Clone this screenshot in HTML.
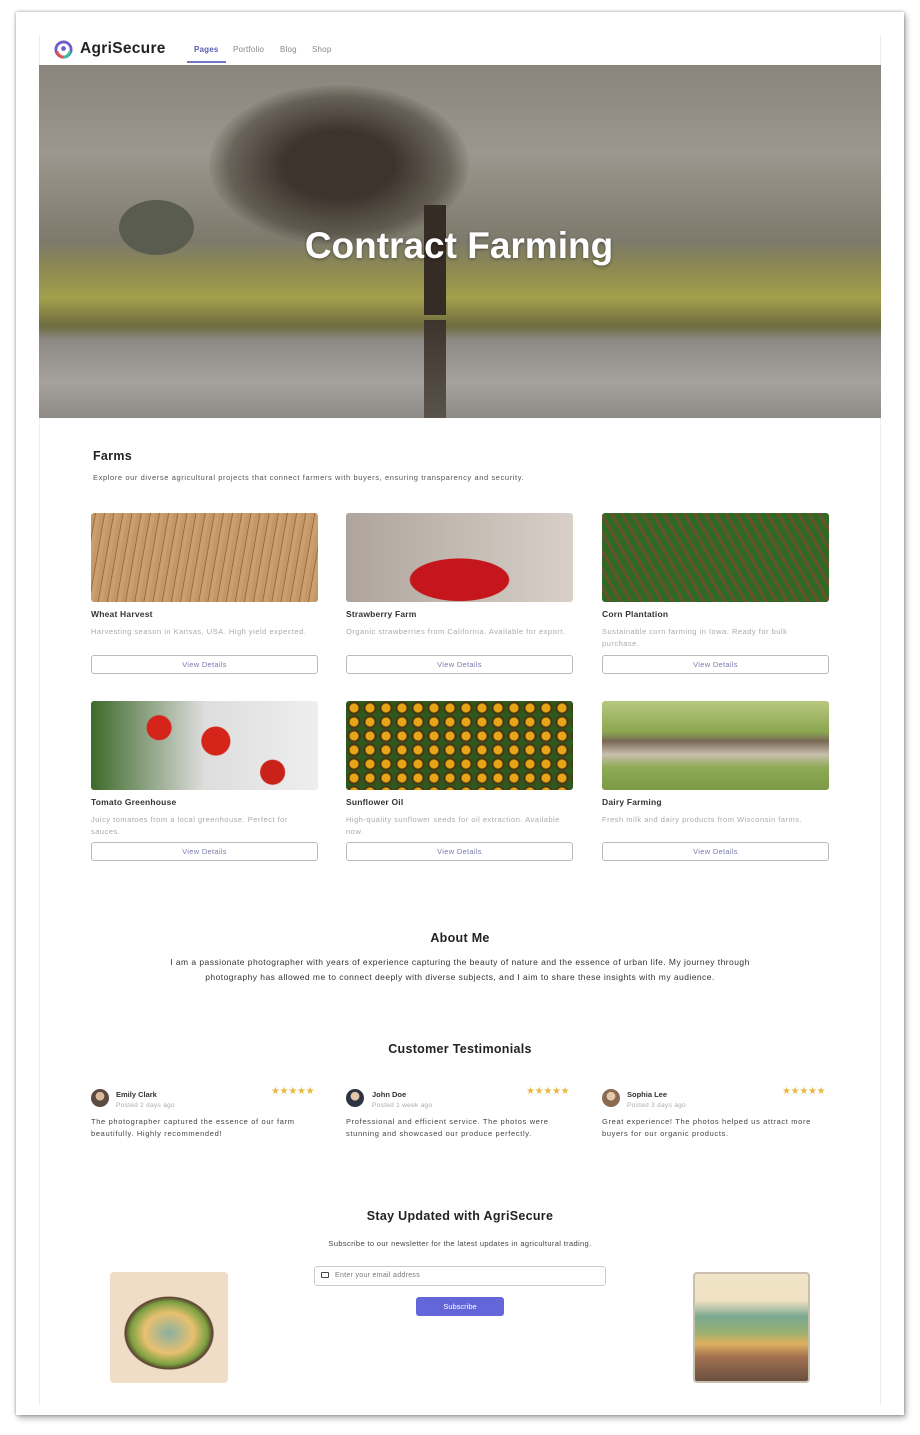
<!DOCTYPE html>
<html><head><meta charset="utf-8"><style>
*{box-sizing:border-box;margin:0;padding:0}
body{width:920px;height:1435px;background:#fff;font-family:"Liberation Sans",sans-serif;position:relative;overflow:hidden;color:#222}
.frame{position:absolute;left:16px;top:12px;width:888px;height:1403px;background:#fff;box-shadow:0 0 3px rgba(0,0,0,.35),2px 3px 6px rgba(0,0,0,.3)}
.inner{position:absolute;left:39px;top:35px;width:842px;height:1370px;border-left:1px solid #eee;border-right:1px solid #eee}
.abs{position:absolute}
.nav{font-size:8px;color:#888;letter-spacing:.2px}
.hero{left:39px;top:65px;width:842px;height:353px;background:linear-gradient(180deg,#8a857c 0%,#9c978e 25%,#7d7a6c 50%,#8d8a50 58%,#a3a04c 66%,#6e6c40 74%,#8d8a86 78%,#a5a29d 90%,#8e8b86 100%);overflow:hidden}
.card-img{width:227px;height:89px;border-radius:3px}
.ct{font-size:8.5px;font-weight:bold;color:#333;letter-spacing:.2px}
.cd{font-size:7.5px;color:#aaa;line-height:12px;letter-spacing:.5px}
.btn{width:227px;height:19px;border:1px solid #bbb;border-radius:3px;font-size:7.5px;color:#7b7bb0;text-align:center;line-height:17px;letter-spacing:.3px}
.h{font-weight:bold;color:#222;letter-spacing:.3px}
.tn{font-size:7.5px;font-weight:bold;color:#333}
.tp{font-size:6.5px;color:#aaa;letter-spacing:.3px}
.tt{font-size:7.5px;color:#444;line-height:12px;width:222px;letter-spacing:.65px}
.st{font-size:10px;color:#e8b93c;letter-spacing:-.3px}
.av{width:18px;height:18px;border-radius:50%;background:radial-gradient(circle at 50% 40%,#d9b89c 30%,#5a4a40 32%)}
</style></head><body>
<div class="frame"></div>
<div class="inner"></div>
<svg class="abs" style="left:54px;top:40px" width="19" height="19" viewBox="0 0 20 20"><circle cx="10" cy="10" r="8" fill="none" stroke="#6a5fc8" stroke-width="3"/><path d="M3 12 A8 8 0 0 0 10 18" stroke="#e0524f" stroke-width="3" fill="none"/><path d="M10 18 A8 8 0 0 0 17 12" stroke="#3cbf9c" stroke-width="3" fill="none"/><circle cx="10" cy="9" r="2.5" fill="#6a5fc8"/></svg>
<div class="abs h" style="left:80px;top:40px;font-size:15.5px">AgriSecure</div>
<div class="abs nav" style="left:194px;top:45px;color:#5a5fb0;font-weight:bold">Pages</div>
<div class="abs" style="left:187px;top:61px;width:39px;height:2px;background:#7078c0"></div>
<div class="abs nav" style="left:233px;top:45px">Portfolio</div>
<div class="abs nav" style="left:280px;top:45px">Blog</div>
<div class="abs nav" style="left:312px;top:45px">Shop</div>
<div class="abs hero">
<div class="abs" style="left:170px;top:20px;width:260px;height:160px;border-radius:50%;background:radial-gradient(ellipse,#3d352d 30%,rgba(60,52,44,.5) 60%,transparent 72%)"></div>
<div class="abs" style="left:385px;top:140px;width:22px;height:110px;background:#352c25"></div>
<div class="abs" style="left:385px;top:255px;width:22px;height:100px;background:linear-gradient(#3d352d,#5a534c)"></div>
<div class="abs" style="left:80px;top:135px;width:75px;height:55px;border-radius:50%;background:#5b5c50"></div>
<div class="abs" style="left:230px;top:160px;width:380px;text-align:center;color:#fff;font-weight:bold;font-size:37px;text-shadow:0 1px 3px rgba(0,0,0,.4)">Contract Farming</div>
</div>
<div class="abs h" style="left:93px;top:449px;font-size:12.5px">Farms</div>
<div class="abs" style="left:93px;top:473px;font-size:7.5px;color:#555;letter-spacing:.6px">Explore our diverse agricultural projects that connect farmers with buyers, ensuring transparency and security.</div>

<div class="abs card-img" style="left:91px;top:513px;background:repeating-linear-gradient(100deg,#c49766 0 4px,#9b6d45 4px 5px,#caa070 5px 9px)"></div>
<div class="abs card-img" style="left:346px;top:513px;background:radial-gradient(ellipse 70px 30px at 50% 75%,#c4161c 70%,transparent 72%),linear-gradient(90deg,#aea49c,#d8d0c8)"></div>
<div class="abs card-img" style="left:602px;top:513px;background:repeating-linear-gradient(60deg,#2e6a22 0 6px,#6a5030 6px 9px)"></div>
<div class="abs card-img" style="left:91px;top:701px;background:radial-gradient(circle at 30% 30%,#d5251a 12px,transparent 13px),radial-gradient(circle at 55% 45%,#d5251a 14px,transparent 15px),radial-gradient(circle at 80% 80%,#c9221a 12px,transparent 13px),linear-gradient(90deg,#3e6a2a,#ddd 50%,#eee)"></div>
<div class="abs card-img" style="left:346px;top:701px;background:radial-gradient(circle,#e7a51a 4px,#4a3010 5px,#2f5a1e 8px) 0 0/16px 14px"></div>
<div class="abs card-img" style="left:602px;top:701px;background:linear-gradient(#b8c880 0,#8aa650 35%,#7a6858 45%,#c8bfae 60%,#8eaa54 75%,#7b9a48)"></div>

<div class="abs ct" style="left:91px;top:609px">Wheat Harvest</div>
<div class="abs cd" style="left:91px;top:626px">Harvesting season in Kansas, USA. High yield expected.</div>
<div class="abs btn" style="left:91px;top:655px">View Details</div>
<div class="abs ct" style="left:346px;top:609px">Strawberry Farm</div>
<div class="abs cd" style="left:346px;top:626px">Organic strawberries from California. Available for export.</div>
<div class="abs btn" style="left:346px;top:655px">View Details</div>
<div class="abs ct" style="left:602px;top:609px">Corn Plantation</div>
<div class="abs cd" style="left:602px;top:626px;width:210px">Sustainable corn farming in Iowa. Ready for bulk purchase.</div>
<div class="abs btn" style="left:602px;top:655px">View Details</div>

<div class="abs ct" style="left:91px;top:797px">Tomato Greenhouse</div>
<div class="abs cd" style="left:91px;top:814px;width:215px">Juicy tomatoes from a local greenhouse. Perfect for sauces.</div>
<div class="abs btn" style="left:91px;top:842px">View Details</div>
<div class="abs ct" style="left:346px;top:797px">Sunflower Oil</div>
<div class="abs cd" style="left:346px;top:814px;width:225px">High-quality sunflower seeds for oil extraction. Available now.</div>
<div class="abs btn" style="left:346px;top:842px">View Details</div>
<div class="abs ct" style="left:602px;top:797px">Dairy Farming</div>
<div class="abs cd" style="left:602px;top:814px;width:225px">Fresh milk and dairy products from Wisconsin farms.</div>
<div class="abs btn" style="left:602px;top:842px">View Details</div>

<div class="abs h" style="left:0;width:920px;text-align:center;top:931px;font-size:12.5px">About Me</div>
<div class="abs" style="left:163px;width:594px;text-align:center;top:955px;font-size:8.5px;color:#333;line-height:14.5px;letter-spacing:.45px">I am a passionate photographer with years of experience capturing the beauty of nature and the essence of urban life. My journey through photography has allowed me to connect deeply with diverse subjects, and I aim to share these insights with my audience.</div>

<div class="abs h" style="left:0;width:920px;text-align:center;top:1042px;font-size:12.5px">Customer Testimonials</div>
<div class="abs av" style="left:91px;top:1089px"></div>
<div class="abs tn" style="left:116px;top:1090px">Emily Clark</div><div class="abs tp" style="left:116px;top:1102px">Posted 2 days ago</div><div class="abs st" style="left:271px;top:1086px">★★★★★</div>
<div class="abs tt" style="left:91px;top:1116px">The photographer captured the essence of our farm beautifully. Highly recommended!</div>
<div class="abs av" style="left:346px;top:1089px;background:radial-gradient(circle at 50% 40%,#e3c5a8 30%,#2c3442 32%)"></div>
<div class="abs tn" style="left:372px;top:1090px">John Doe</div><div class="abs tp" style="left:372px;top:1102px">Posted 1 week ago</div><div class="abs st" style="left:526px;top:1086px">★★★★★</div>
<div class="abs tt" style="left:346px;top:1116px">Professional and efficient service. The photos were stunning and showcased our produce perfectly.</div>
<div class="abs av" style="left:602px;top:1089px;background:radial-gradient(circle at 50% 40%,#e8c8aa 30%,#8a6a50 32%)"></div>
<div class="abs tn" style="left:627px;top:1090px">Sophia Lee</div><div class="abs tp" style="left:627px;top:1102px">Posted 3 days ago</div><div class="abs st" style="left:782px;top:1086px">★★★★★</div>
<div class="abs tt" style="left:602px;top:1116px">Great experience! The photos helped us attract more buyers for our organic products.</div>

<div class="abs h" style="left:0;width:920px;text-align:center;top:1209px;font-size:12.5px">Stay Updated with AgriSecure</div>
<div class="abs" style="left:0;width:920px;text-align:center;top:1239px;font-size:7.5px;color:#444;letter-spacing:.35px">Subscribe to our newsletter for the latest updates in agricultural trading.</div>
<div class="abs" style="left:314px;top:1266px;width:292px;height:20px;border:1px solid #ccc;border-radius:3px;font-size:7px;color:#777;padding:5px 0 0 20px;letter-spacing:.3px">Enter your email address</div>
<div class="abs" style="left:321px;top:1272px;width:8px;height:6px;border:1px solid #444;border-radius:1px"></div>
<div class="abs" style="left:416px;top:1297px;width:88px;height:19px;background:#6366d9;border-radius:3px;color:#fff;font-size:7.5px;text-align:center;line-height:19px">Subscribe</div>
<div class="abs" style="left:110px;top:1272px;width:118px;height:111px;border-radius:4px;background:radial-gradient(ellipse 55px 45px at 50% 55%,#8ab0a0 0,#e8c070 45%,#7aa040 70%,#5a4030 80%,transparent 82%),#f0ddc8"></div>
<div class="abs" style="left:693px;top:1272px;width:117px;height:111px;border-radius:4px;border:2px solid #c8bfb0;background:linear-gradient(#f1e6c8 0,#efe0c0 25%,#7aa890 40%,#9bb070 55%,#e0b060 65%,#a07050 78%,#6a5040 100%)"></div>
</body></html>
